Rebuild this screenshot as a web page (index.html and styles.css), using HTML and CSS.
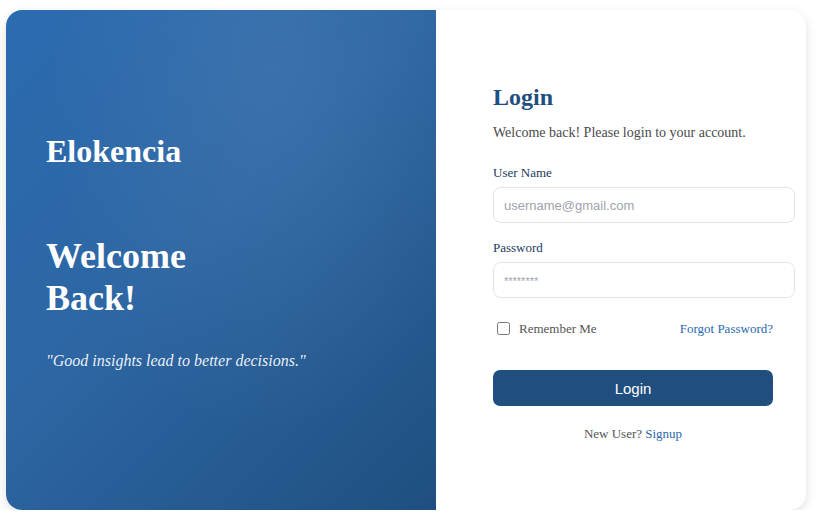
FILE: index.html
```html
<!DOCTYPE html>
<html lang="en">
<head>
<meta charset="utf-8">
<title>Elokencia - Login</title>
<link rel="stylesheet" href="styles.css">
</head>
<body>
<div class="card">
  <section class="hero">
    <div class="brand">Elokencia</div>
    <h1 class="hero-title">Welcome<br>Back!</h1>
    <p class="quote">"Good insights lead to better decisions."</p>
  </section>
  <section class="panel">
    <form class="form">
      <h2 class="title">Login</h2>
      <p class="subtitle">Welcome back! Please login to your account.</p>
      <label class="label" for="user">User Name</label>
      <input class="input" id="user" type="text" placeholder="username@gmail.com">
      <label class="label label-gap" for="pass">Password</label>
      <input class="input input-pass" id="pass" type="password" placeholder="********">
      <div class="options">
        <label class="remember"><input type="checkbox" class="check"><span class="remember-text">Remember Me</span></label>
        <a class="link" href="#">Forgot Password?</a>
      </div>
      <button type="button" class="btn">Login</button>
      <p class="signup">New User? <a class="link" href="#">Signup</a></p>
    </form>
  </section>
</div>
</body>
</html>
```
FILE: styles.css
```css
* { box-sizing: border-box; }
html, body { margin: 0; padding: 0; background: #ffffff; }
body { font-family: "Liberation Serif", "Times New Roman", serif; }

.card {
  display: flex;
  width: 800px;
  height: 500px;
  margin: 10px 0 0 6px;
  border-radius: 16px;
  overflow: hidden;
  background: #fff;
  box-shadow: 0 4px 12px rgba(0, 0, 0, 0.12);
}

.hero {
  width: 430px;
  flex: none;
  padding: 123px 40px 0 40px;
  color: #fff;
  background:
    radial-gradient(ellipse at 62% 12%, rgba(255, 255, 255, 0.07), rgba(255, 255, 255, 0) 60%),
    linear-gradient(135deg, #2b6bb0 0%, #2d66a3 45%, #1f4f80 100%);
}

.brand {
  font-size: 32px;
  font-weight: bold;
  line-height: 37px;
}

.hero-title {
  margin: 66px 0 0;
  font-size: 36px;
  line-height: 41.5px;
  font-weight: bold;
}

.quote {
  margin: 33px 0 0;
  font-size: 16px;
  line-height: 18px;
  font-style: italic;
  color: rgba(255, 255, 255, 0.92);
}

.panel {
  flex: 1;
  padding: 73px 0 0 57px;
}

.form {
  width: 280px;
  display: flex;
  flex-direction: column;
  align-items: stretch;
}

.title {
  margin: 0;
  font-size: 24px;
  line-height: 28px;
  color: #1f4e80;
  font-weight: bold;
}

.subtitle {
  margin: 12px 0 0;
  font-size: 14px;
  line-height: 20px;
  color: #4a4a4a;
}

.label {
  margin-top: 22px;
  font-size: 13px;
  line-height: 16px;
  color: #1c3a5e;
}

.label-gap { margin-top: 17px; }

.input {
  box-sizing: content-box;
  width: 100%;
  height: 14px;
  margin-top: 6px;
  padding: 10px;
  border: 1px solid #e2e4e9;
  border-radius: 8px;
  font-family: "Liberation Sans", Arial, sans-serif;
  font-size: 13px;
  color: #333;
  outline: none;
}

.input::placeholder { color: #9ea3ad; }
.input-pass::placeholder { font-size: 11px; }

.options {
  display: flex;
  align-items: center;
  justify-content: space-between;
  height: 19px;
  margin-top: 21px;
  font-size: 13px;
  line-height: 16px;
}

.remember { display: flex; align-items: center; }
.check { width: 13px; height: 13px; margin: 3px 3px 3px 4px; }
.remember-text { margin-left: 6px; color: #555; }

.link { color: #2a68ad; text-decoration: none; }

.btn {
  height: 36px;
  margin-top: 32px;
  border: none;
  border-radius: 7px;
  background: #1f4e7f;
  color: #fff;
  font-family: "Liberation Sans", Arial, sans-serif;
  font-size: 15px;
}

.signup {
  margin: 20px 0 0;
  text-align: center;
  font-size: 13px;
  line-height: 16px;
  color: #555;
}
```
